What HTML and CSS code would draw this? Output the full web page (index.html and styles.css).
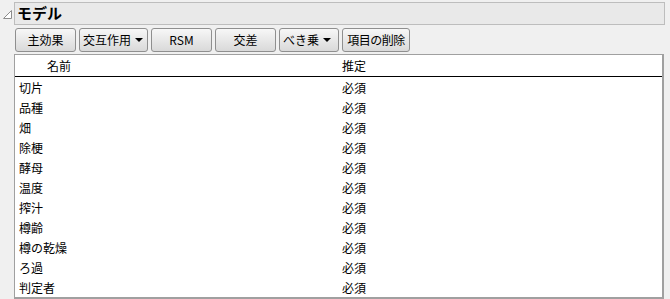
FILE: index.html
```html
<!DOCTYPE html>
<html lang="ja">

<head>
    <meta charset="UTF-8">
    <title>モデル</title>
    <link rel="stylesheet" href="styles.css">
</head>

<body>
    <div class="report">
        <div class="toggle">
            <svg width="10" height="10" viewBox="0 0 10 10">
                <polygon points="8.5,0.5 8.5,8.5 0.5,8.5" fill="#fff" stroke="#8c8c8c" stroke-width="1" />
            </svg>
        </div>
        <div class="content">
            <div class="title-bar">モデル</div>
            <div class="toolbar">
                <div class="btn w61">主効果</div>
                <div class="btn w69 menu">交互作用 <span class="caret"></span></div>
                <div class="btn w61">RSM</div>
                <div class="btn w61">交差</div>
                <div class="btn w60 menu">べき乗 <span class="caret"></span></div>
                <div class="btn w68 tight">項目の削除</div>
            </div>
            <div class="table">
                <div class="thead">
                    <div class="col-name head-name">名前</div>
                    <div class="col-est">推定</div>
                </div>
                <div class="row"><div class="col-name">切片</div><div class="col-est">必須</div></div>
                <div class="row"><div class="col-name">品種</div><div class="col-est">必須</div></div>
                <div class="row"><div class="col-name">畑</div><div class="col-est">必須</div></div>
                <div class="row"><div class="col-name">除梗</div><div class="col-est">必須</div></div>
                <div class="row"><div class="col-name">酵母</div><div class="col-est">必須</div></div>
                <div class="row"><div class="col-name">温度</div><div class="col-est">必須</div></div>
                <div class="row"><div class="col-name">搾汁</div><div class="col-est">必須</div></div>
                <div class="row"><div class="col-name">樽齢</div><div class="col-est">必須</div></div>
                <div class="row"><div class="col-name">樽の乾燥</div><div class="col-est">必須</div></div>
                <div class="row"><div class="col-name">ろ過</div><div class="col-est">必須</div></div>
                <div class="row"><div class="col-name">判定者</div><div class="col-est">必須</div></div>
            </div>
        </div>
    </div>
</body>

</html>
```

FILE: styles.css
```css
body {
    margin: 0;
    background: #f0f0f0;
    color: #000;
    font-family: "Noto Sans CJK JP", "Noto Sans", sans-serif;
    font-size: 12px;
}

.report {
    display: flex;
    flex-direction: row;
    padding: 2px 5px 0 0;
}

.toggle {
    width: 14px;
    padding: 8px 0 0 3px;
    box-sizing: border-box;
}

.toggle svg {
    display: block;
}

.content {
    flex: 1;
}

.title-bar {
    height: 21px;
    border: 1px solid #bdbdbd;
    background: #e9e9e9;
    font-size: 15px;
    font-weight: bold;
    line-height: 20px;
    padding-left: 2px;
}

.toolbar {
    display: flex;
    flex-direction: row;
    gap: 3px;
    margin: 3px 0 2px 1px;
}

.btn {
    height: 22px;
    border: 1px solid #8f8f8f;
    border-radius: 3px;
    background: linear-gradient(#f7f7f7, #e8e8e8 50%, #d9d9d9);
    display: flex;
    justify-content: center;
    align-items: center;
    line-height: 1;
    box-sizing: content-box;
}

.w61 { width: 59px; }
.w69 { width: 67px; }
.w60 { width: 58px; }
.w68 { width: 66px; }

.menu {
    justify-content: flex-start;
    padding-left: 0;
}

.menu {
    padding-left: 3px;
    width: auto;
}

.w69.menu { width: 64px; }
.w60.menu { width: 55px; }

.tight {
    letter-spacing: -0.5px;
}

.caret {
    display: inline-block;
    width: 0;
    height: 0;
    margin-left: 4px;
    border-left: 4px solid transparent;
    border-right: 4px solid transparent;
    border-top: 4px solid #000;
}

.table {
    margin-right: 1px;
    height: 242px;
    background: #fff;
    border: 1px solid #a0a0a0;
    border-right: 2px solid #a0a0a0;
    border-bottom: 2px solid #a0a0a0;
    box-sizing: content-box;
}

.thead {
    display: flex;
    height: 21px;
    line-height: 22px;
    border-bottom: 1px solid #000;
}

.row {
    display: flex;
    height: 20px;
    line-height: 20px;
}

.thead + .row {
    margin-top: 1px;
}

.col-name {
    width: 323px;
    padding-left: 4px;
}

.head-name {
    padding-left: 32px;
    width: 295px;
}

.col-est {
    flex: 1;
}
```
